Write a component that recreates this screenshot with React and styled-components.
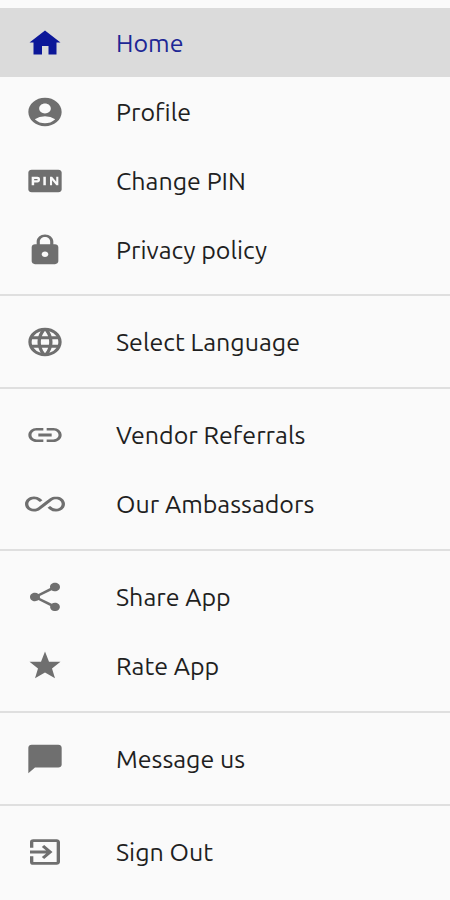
import React from "react";
import styled, { createGlobalStyle } from "styled-components";
import {
  MdAccountCircle, MdFiberPin, MdLock, MdLanguage, MdLink,
  MdAllInclusive, MdShare, MdChatBubble, MdExitToApp,
} from "react-icons/md";

const GlobalStyle = createGlobalStyle`
  * { box-sizing: border-box; }
  body { margin: 0; background: #fafafa; }
`;

const Drawer = styled.nav`
  min-height: 100vh;
  padding-top: 8px;
  background: #fafafa;
  font-family: Ubuntu, "Noto Sans", sans-serif;
`;

const Group = styled.ul`
  list-style: none;
  margin: 0;
  padding: 0 0 11px;
  & + & {
    padding: 11px 0;
    border-top: 2px solid #dfdfdf;
  }
  &:first-child { padding-bottom: 10px; }
`;

const Item = styled.a`
  display: flex;
  align-items: center;
  height: 69px;
  padding-left: 25px;
  gap: 51px;
  color: ${(p) => (p.$active ? "#1d2795" : "#1f1f1f")};
  background: ${(p) => (p.$active ? "#dbdbdb" : "transparent")};
  font-size: 25px;
  line-height: 28px;
  text-decoration: none;
`;

const IconSlot = styled.span`
  display: flex;
  flex: none;
  color: ${(p) => (p.$active ? "#0c1799" : "#6f6f6f")};
  svg { width: 40px; height: 34px; }
`;

const HomeIcon = (props) => (
  <svg viewBox="0 0 40 34" fill="currentColor" {...props}>
    <path d="M20 4.5 35.5 16.5H31.5V28.5H23.5V20H17V28.5H8.5V16.5H4.5Z" />
  </svg>
);

const StarIcon = (props) => (
  <svg viewBox="0 0 40 34" fill="currentColor" {...props}>
    <path d="M20 2.5 24 12.7H35.5L27 19.4 30 29.3 20 23.4 10 29.3 13 19.4 4.5 12.7H16Z" />
  </svg>
);

const groups = [
  [["Home", HomeIcon], ["Profile", MdAccountCircle], ["Change PIN", MdFiberPin], ["Privacy policy", MdLock]],
  [["Select Language", MdLanguage]],
  [["Vendor Referrals", MdLink], ["Our Ambassadors", MdAllInclusive]],
  [["Share App", MdShare], ["Rate App", StarIcon]],
  [["Message us", MdChatBubble]],
  [["Sign Out", MdExitToApp]],
];

export default function App() {
  return (
    <>
      <GlobalStyle />
      <Drawer aria-label="Main menu">
        {groups.map((items) => (
          <Group key={items[0][0]}>
            {items.map(([label, Icon]) => (
              <li key={label}>
                <Item href="#" $active={label === "Home"}>
                  <IconSlot $active={label === "Home"}>
                    <Icon aria-hidden="true" preserveAspectRatio="none" />
                  </IconSlot>
                  {label}
                </Item>
              </li>
            ))}
          </Group>
        ))}
      </Drawer>
    </>
  );
}
